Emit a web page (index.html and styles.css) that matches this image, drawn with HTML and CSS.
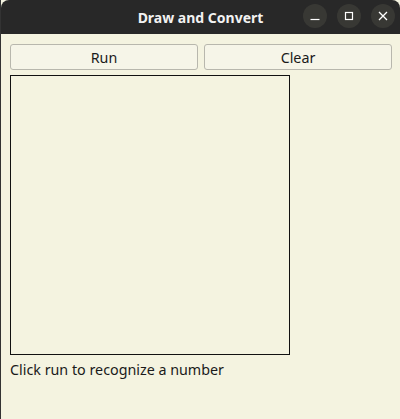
FILE: index.html
```html
<!DOCTYPE html>
<html>
<head>
<meta charset="utf-8">
<link rel="stylesheet" href="styles.css">
</head>
<body>
<div class="window">
  <div class="titlebar">
    <div class="title">Draw and Convert</div>
    <div class="controls">
      <div class="ctl"><svg width="24" height="24" viewBox="0 0 24 24"><line x1="7.5" y1="15.5" x2="16.5" y2="15.5" stroke="#fff" stroke-width="1.2"/></svg></div>
      <div class="ctl"><svg width="24" height="24" viewBox="0 0 24 24"><rect x="8.5" y="8.5" width="7" height="7" fill="none" stroke="#fff" stroke-width="1.2"/></svg></div>
      <div class="ctl"><svg width="24" height="24" viewBox="0 0 24 24"><path d="M8 8 L16 16 M16 8 L8 16" stroke="#fff" stroke-width="1.3"/></svg></div>
    </div>
  </div>
  <div class="content">
    <div class="buttons">
      <button class="btn">Run</button>
      <button class="btn">Clear</button>
    </div>
    <div class="canvas"></div>
    <div class="status">Click run to recognize a number</div>
  </div>
</div>
</body>
</html>
```
FILE: styles.css
```css
html, body {
  margin: 0;
  padding: 0;
  width: 400px;
  height: 419px;
  overflow: hidden;
  background: #f4f3e0;
}
.window {
  width: 400px;
  height: 419px;
  box-sizing: border-box;
  border-left: 1px solid #333;
  display: flex;
  flex-direction: column;
  font-family: "Noto Sans", "DejaVu Sans", sans-serif;
}
.titlebar {
  height: 34px;
  flex: none;
  background: #282828;
  border-radius: 8px 8px 0 0;
  position: relative;
  display: flex;
  align-items: center;
  justify-content: center;
}
.title {
  color: #f2f2f2;
  font-weight: bold;
  font-size: 14px;
}
.controls {
  position: absolute;
  right: 5px;
  top: 4px;
  display: flex;
  gap: 10px;
}
.ctl {
  width: 24px;
  height: 24px;
  border-radius: 50%;
  background: #383834;
}
.ctl svg { display: block; }
.content {
  padding: 10px 8px 0 9px;
  display: flex;
  flex-direction: column;
}
.buttons {
  display: flex;
  gap: 6px;
  height: 26px;
}
.btn {
  flex: 1;
  height: 26px;
  border: 1px solid #b8b7ad;
  border-radius: 3px;
  background: #f6f5e8;
  font-family: "Noto Sans", "DejaVu Sans", sans-serif;
  font-size: 14.3px;
  color: #1a1a1a;
  padding: 0;
}
.canvas {
  margin-top: 5px;
  width: 280px;
  height: 280px;
  box-sizing: border-box;
  border: 1px solid #111;
}
.status {
  margin-top: 5px;
  font-size: 14.3px;
  color: #1a1a1a;
  line-height: 20px;
}
```
